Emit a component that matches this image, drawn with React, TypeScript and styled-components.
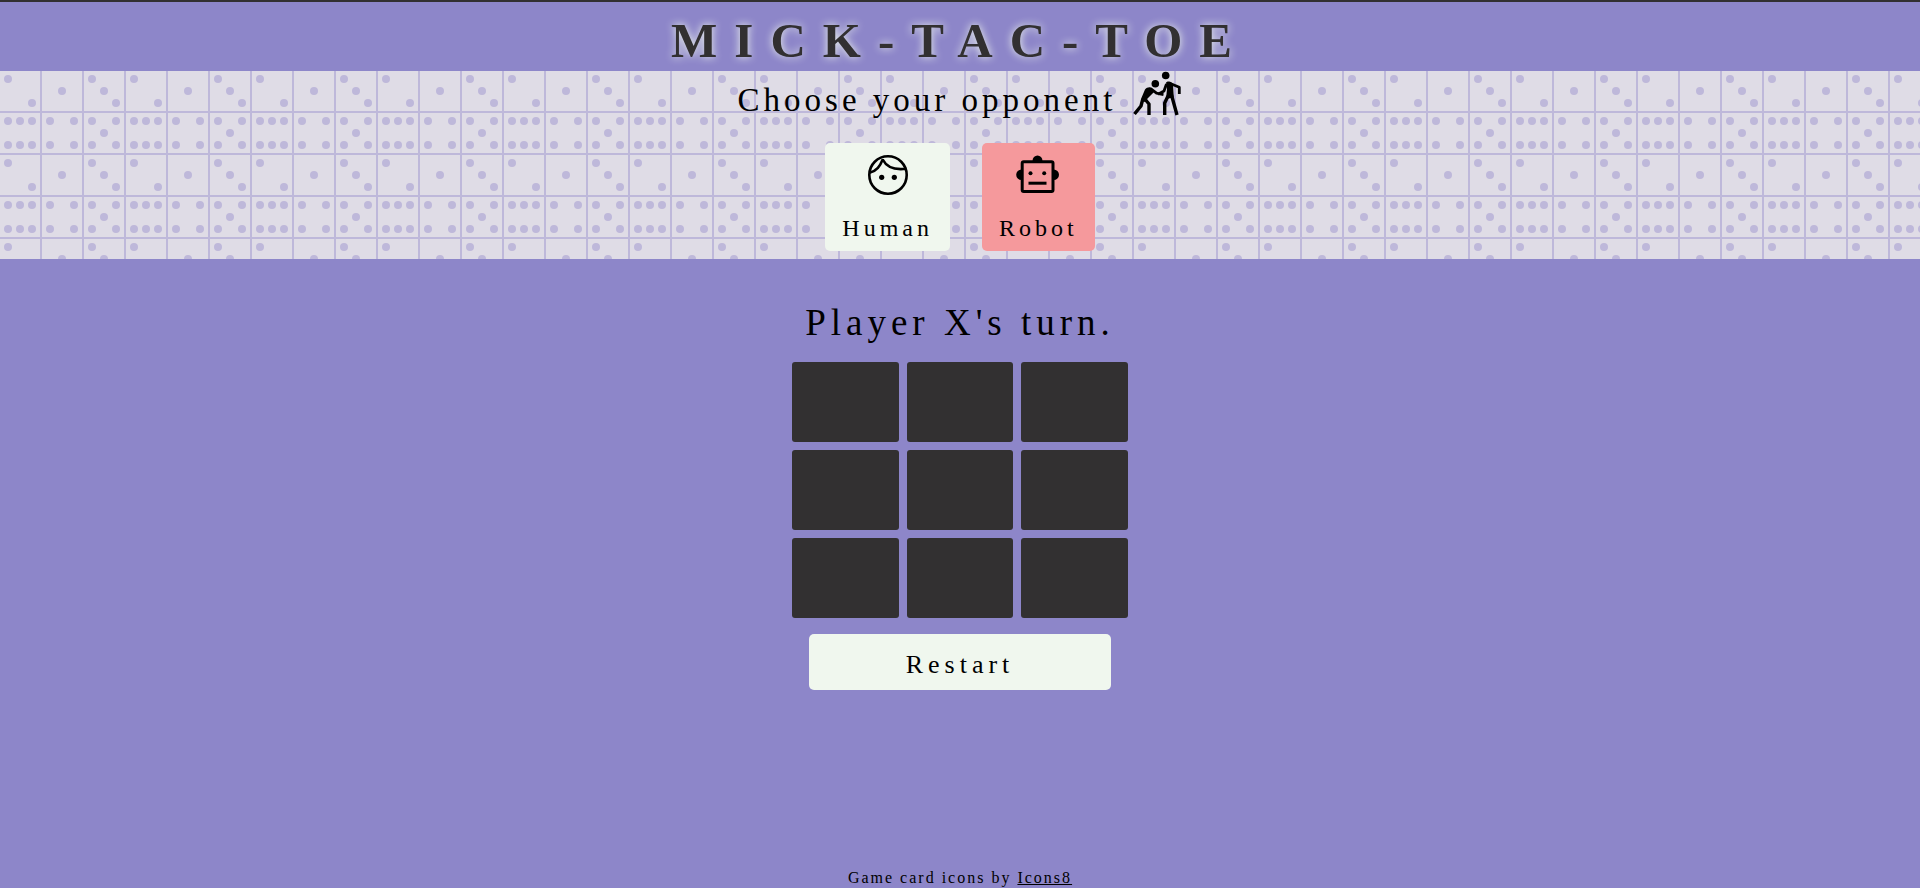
import React, { useState } from "react";
import styled, { createGlobalStyle } from "styled-components";

const colors = {
  page: "#8d86c9",
  dark: "#323031",
  light: "#f0f7ee",
  robot: "#f5999c",
  dice: "#dfdce6",
  pips: "#beb8da",
};

/* Repeating tile of six dice: 2, 1, 3 above 6, 4, 5. */
const pips = [
  [8, 8], [32, 32],
  [62, 20],
  [92, 8], [104, 20], [116, 32],
  [8, 50], [20, 50], [32, 50], [8, 74], [20, 74], [32, 74],
  [50, 50], [74, 50], [50, 74], [74, 74],
  [92, 50], [116, 50], [104, 62], [92, 74], [116, 74],
];
const diceTile =
  "data:image/svg+xml," +
  encodeURIComponent(
    `<svg xmlns="http://www.w3.org/2000/svg" width="126" height="84"><g fill="${colors.pips}">` +
      `<path d="M40 0h2v84h-2zM82 0h2v84h-2zM124 0h2v84h-2zM0 40h126v2H0zM0 82h126v2H0z"/>` +
      pips.map(([x, y]) => `<circle cx="${x}" cy="${y}" r="4"/>`).join("") +
      `</g></svg>`
  );

const GlobalStyle = createGlobalStyle`
  * { box-sizing: border-box; }
  body {
    margin: 0;
    background: ${colors.page};
    color: #000;
    font-family: "Liberation Serif", "Times New Roman", serif;
  }
  h1, h2, p { margin: 0; font-weight: 400; }
  button { font-family: inherit; color: inherit; border: 0; cursor: pointer; }
`;

const Page = styled.div`
  min-height: 100vh;
  display: flex;
  flex-direction: column;
`;

const Header = styled.header`
  border-top: 2px solid ${colors.dark};
  padding: 11px 0 2px;
  text-align: center;
`;

const Title = styled.h1`
  && { font-weight: 700; }
  font-size: 49px;
  line-height: 56px;
  letter-spacing: 17px;
  color: ${colors.dark};
  text-shadow: 0 0 8px ${colors.light};
`;

const Opponents = styled.section`
  display: flex;
  flex-direction: column;
  align-items: center;
  gap: 22px;
  padding-bottom: 8px;
  background: ${colors.dice} url("${diceTile}");
`;

const Prompt = styled.div`
  display: flex;
  align-items: center;
  gap: 16px;
  height: 50px;
`;

const PromptText = styled.h2`
  font-size: 33px;
  line-height: 40px;
  padding-top: 8px;
  letter-spacing: 4px;
`;

const Choices = styled.div`
  display: flex;
  gap: 32px;
`;

const Choice = styled.button<{ $tone: string }>`
  display: flex;
  flex-direction: column;
  align-items: center;
  justify-content: space-between;
  height: 108px;
  padding: 8px 17px;
  border-radius: 5px;
  background: ${(p) => p.$tone};
  font-size: 24px;
  line-height: 30px;
  letter-spacing: 4px;
`;

const Icon = styled.svg`
  display: block;
  flex: none;
`;

const Game = styled.main`
  flex: 1;
  display: flex;
  flex-direction: column;
  align-items: center;
  gap: 16px;
  padding-top: 40px;
`;

const Status = styled.p`
  font-size: 37px;
  line-height: 47px;
  letter-spacing: 5px;
`;

const Board = styled.div`
  display: grid;
  grid-template-columns: repeat(3, 1fr);
  grid-auto-rows: 80px;
  gap: 8px;
  width: 336px;
`;

const Cell = styled.button`
  border-radius: 3px;
  background: ${colors.dark};
  color: ${colors.light};
  font-size: 49px;
`;

const Restart = styled.button`
  width: 302px;
  height: 56px;
  padding: 6px 0 0;
  border-radius: 5px;
  background: ${colors.light};
  font-size: 26px;
  letter-spacing: 5px;
`;

const Footer = styled.footer`
  text-align: center;
  font-size: 16px;
  line-height: 20px;
  letter-spacing: 2px;

  a { color: inherit; }
`;

const RivalsIcon = () => (
  <Icon width="50" height="50" viewBox="0 0 50 50" aria-hidden="true">
    <circle cx="33.700" cy="4.500" r="3.800" />
    <circle cx="23.300" cy="12.800" r="3.800" />
    <g fill="none" stroke="#000" strokeLinejoin="round">
      <path d="M37 12l10.300 4.200V23" strokeWidth="2.800" />
      <path d="M34.500 13L32 20l-6 3.200M18.500 17.500l6 4.700 7 1.500" strokeWidth="2.800" />
      <path d="M36 25l-3.300 7v12M39.500 24L45 44M12 27l5 6v11M10.800 28L9 35l-6.500 8" strokeWidth="3.400" />
    </g>
    <path d="M34 11.500c1-1.500 4-1.500 5.500 0l1.500 2 .800 13-7.800 1.500 1-10z" />
    <path d="M13 18.500c2-2.500 6-3 7.500-.500l1.500 3-6.500 6.500-1.500 3.500c-2 0-5-1-4.800-3.500z" />
  </Icon>
);

const HumanIcon = () => (
  <Icon width="48" height="48" viewBox="0 0 48 48" aria-hidden="true">
    <g fill="none" stroke="#000" strokeWidth="2.600">
      <circle cx="24" cy="24" r="18.700" />
      <path d="M18.700 8.500C22 15 29 19.500 42.500 17.700M18.700 8.500C16 15 13 20 5.500 21.800" />
    </g>
    <circle cx="17.700" cy="26.300" r="2.600" />
    <circle cx="30.300" cy="26.300" r="2.600" />
  </Icon>
);

const RobotIcon = () => (
  <Icon width="48" height="48" viewBox="0 0 48 48" aria-hidden="true">
    <rect x="8.200" y="10.800" width="30.800" height="29.700" rx="1.500" fill="none" stroke="#000" strokeWidth="3" />
    <path d="M18.500 10a5 5.500 0 0 1 10 0zM7.500 18.500a5.300 5.300 0 0 0 0 10.600zM39.700 18.500a5.300 5.300 0 0 1 0 10.600z" />
    <circle cx="16.500" cy="22.300" r="2" />
    <circle cx="30.200" cy="22.300" r="2" />
    <path d="M14.500 30.700h18v3h-18z" />
  </Icon>
);

export default function App() {
  const [marks, setMarks] = useState<string[]>(Array(9).fill(""));
  const turn = marks.filter(Boolean).length % 2 === 0 ? "X" : "O";
  const play = (i: number) =>
    setMarks((m) => (m[i] ? m : m.map((v, n) => (n === i ? turn : v))));

  return (
    <Page>
      <GlobalStyle />
      <Header>
        <Title>MICK-TAC-TOE</Title>
      </Header>
      <Opponents>
        <Prompt>
          <PromptText>Choose your opponent</PromptText>
          <RivalsIcon />
        </Prompt>
        <Choices>
          <Choice type="button" $tone={colors.light}>
            <HumanIcon />
            Human
          </Choice>
          <Choice type="button" $tone={colors.robot}>
            <RobotIcon />
            Robot
          </Choice>
        </Choices>
      </Opponents>
      <Game>
        <Status>Player {turn}'s turn.</Status>
        <Board>
          {marks.map((mark, i) => (
            <Cell key={i} type="button" aria-label={`Square ${i + 1} ${mark}`} onClick={() => play(i)}>
              {mark}
            </Cell>
          ))}
        </Board>
        <Restart type="button" onClick={() => setMarks(Array(9).fill(""))}>
          Restart
        </Restart>
      </Game>
      <Footer>
        Game card icons by <a href="#icons8">Icons8</a>
      </Footer>
    </Page>
  );
}
